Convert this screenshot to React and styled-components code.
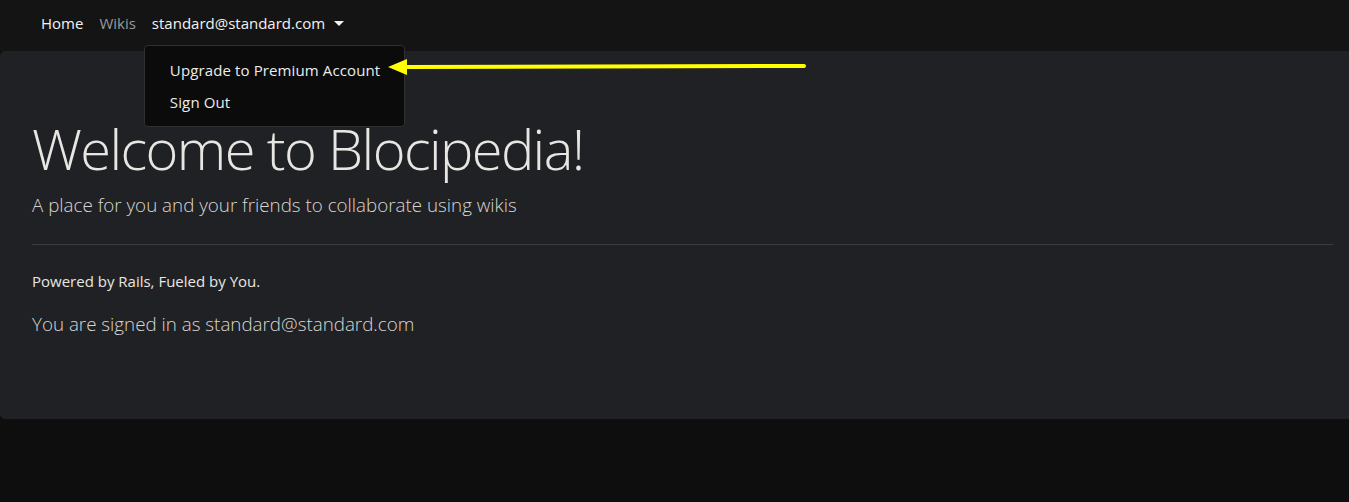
import styled, { createGlobalStyle } from 'styled-components';

const GlobalStyle = createGlobalStyle`
  body {
    margin: 0;
    background: #0e0e0e;
    font-family: "Open Sans", "Noto Sans", sans-serif;
    color: #e8e6e3;
  }
`

const Page = styled.div`
  position: relative;
  min-height: 502px;
`

const Navbar = styled.nav`
  display: flex;
  align-items: flex-start;
  height: 51px;
  box-sizing: border-box;
  padding: 3px 16px 0 33px;
  background: #141414;
`

const NavList = styled.ul`
  display: flex;
  list-style: none;
  margin: 0;
  padding: 0;
`

const NavItem = styled.li`
  position: relative;
`

const NavLink = styled.a`
  display: flex;
  align-items: center;
  padding: 8px;
  font-size: 15px;
  line-height: 24px;
  text-decoration: none;
  color: ${({ $muted }) => ($muted ? '#9a9a9a' : '#f2f2f2')};
`

const Caret = styled.span`
  display: inline-block;
  margin-left: 9px;
  border-top: 5px solid #f2f2f2;
  border-left: 5px solid transparent;
  border-right: 5px solid transparent;
`

const Dropdown = styled.div`
  position: absolute;
  top: 42px;
  left: 0;
  z-index: 5;
  width: 261px;
  box-sizing: border-box;
  padding: 8px 0;
  background: #0b0b0b;
  border: 1px solid #303030;
  border-radius: 4px;
`

const DropdownItem = styled.a`
  display: block;
  padding: 4px 24px 4px 25px;
  font-size: 15px;
  line-height: 24px;
  letter-spacing: 0.12px;
  white-space: nowrap;
  color: #ececec;
  text-decoration: none;
`

const Jumbotron = styled.section`
  padding: 64px 16px 64px 32px;
  background: #202124;
  border-radius: 5px 0 0 5px;
`

const Title = styled.h1`
  margin: 0 0 8px;
  font-size: 56px;
  font-weight: 300;
  line-height: 67px;
  letter-spacing: -1.6px;
  color: #e8e6e3;
`

const Lead = styled.p`
  margin: 0 0 16px;
  font-size: 18.8px;
  font-weight: 300;
  line-height: 30px;
  color: #d9d6d2;
`

const Rule = styled.hr`
  margin: 24px 0;
  border: 0;
  border-top: 1px solid #3a3c3f;
`

const Small = styled.p`
  margin: 0 0 16px;
  font-size: 15px;
  line-height: 24px;
  color: #e8e6e3;
`

const Arrow = styled.svg`
  position: absolute;
  top: 56px;
  left: 384px;
  z-index: 6;
`

const App = () => {
  return (
    <>
      <GlobalStyle />
      <Page>
        <Navbar>
          <NavList>
            <NavItem><NavLink href='#'>Home</NavLink></NavItem>
            <NavItem><NavLink href='#' $muted>Wikis</NavLink></NavItem>
            <NavItem>
              <NavLink href='#'>standard@standard.com<Caret /></NavLink>
              <Dropdown>
                <DropdownItem href='#'>Upgrade to Premium Account</DropdownItem>
                <DropdownItem href='#'>Sign Out</DropdownItem>
              </Dropdown>
            </NavItem>
          </NavList>
        </Navbar>
        <Jumbotron>
          <Title>Welcome to Blocipedia!</Title>
          <Lead>A place for you and your friends to collaborate using wikis</Lead>
          <Rule />
          <Small>Powered by Rails, Fueled by You.</Small>
          <Lead>You are signed in as standard@standard.com</Lead>
        </Jumbotron>
        <Arrow width='426' height='22' viewBox='0 0 426 22'>
          <line x1='20' y1='11' x2='420' y2='10' stroke='#ffff00' strokeWidth='4' strokeLinecap='round' />
          <polygon points='4,11 23,3 23,19' fill='#ffff00' />
        </Arrow>
      </Page>
    </>
  );
}

export default App;
